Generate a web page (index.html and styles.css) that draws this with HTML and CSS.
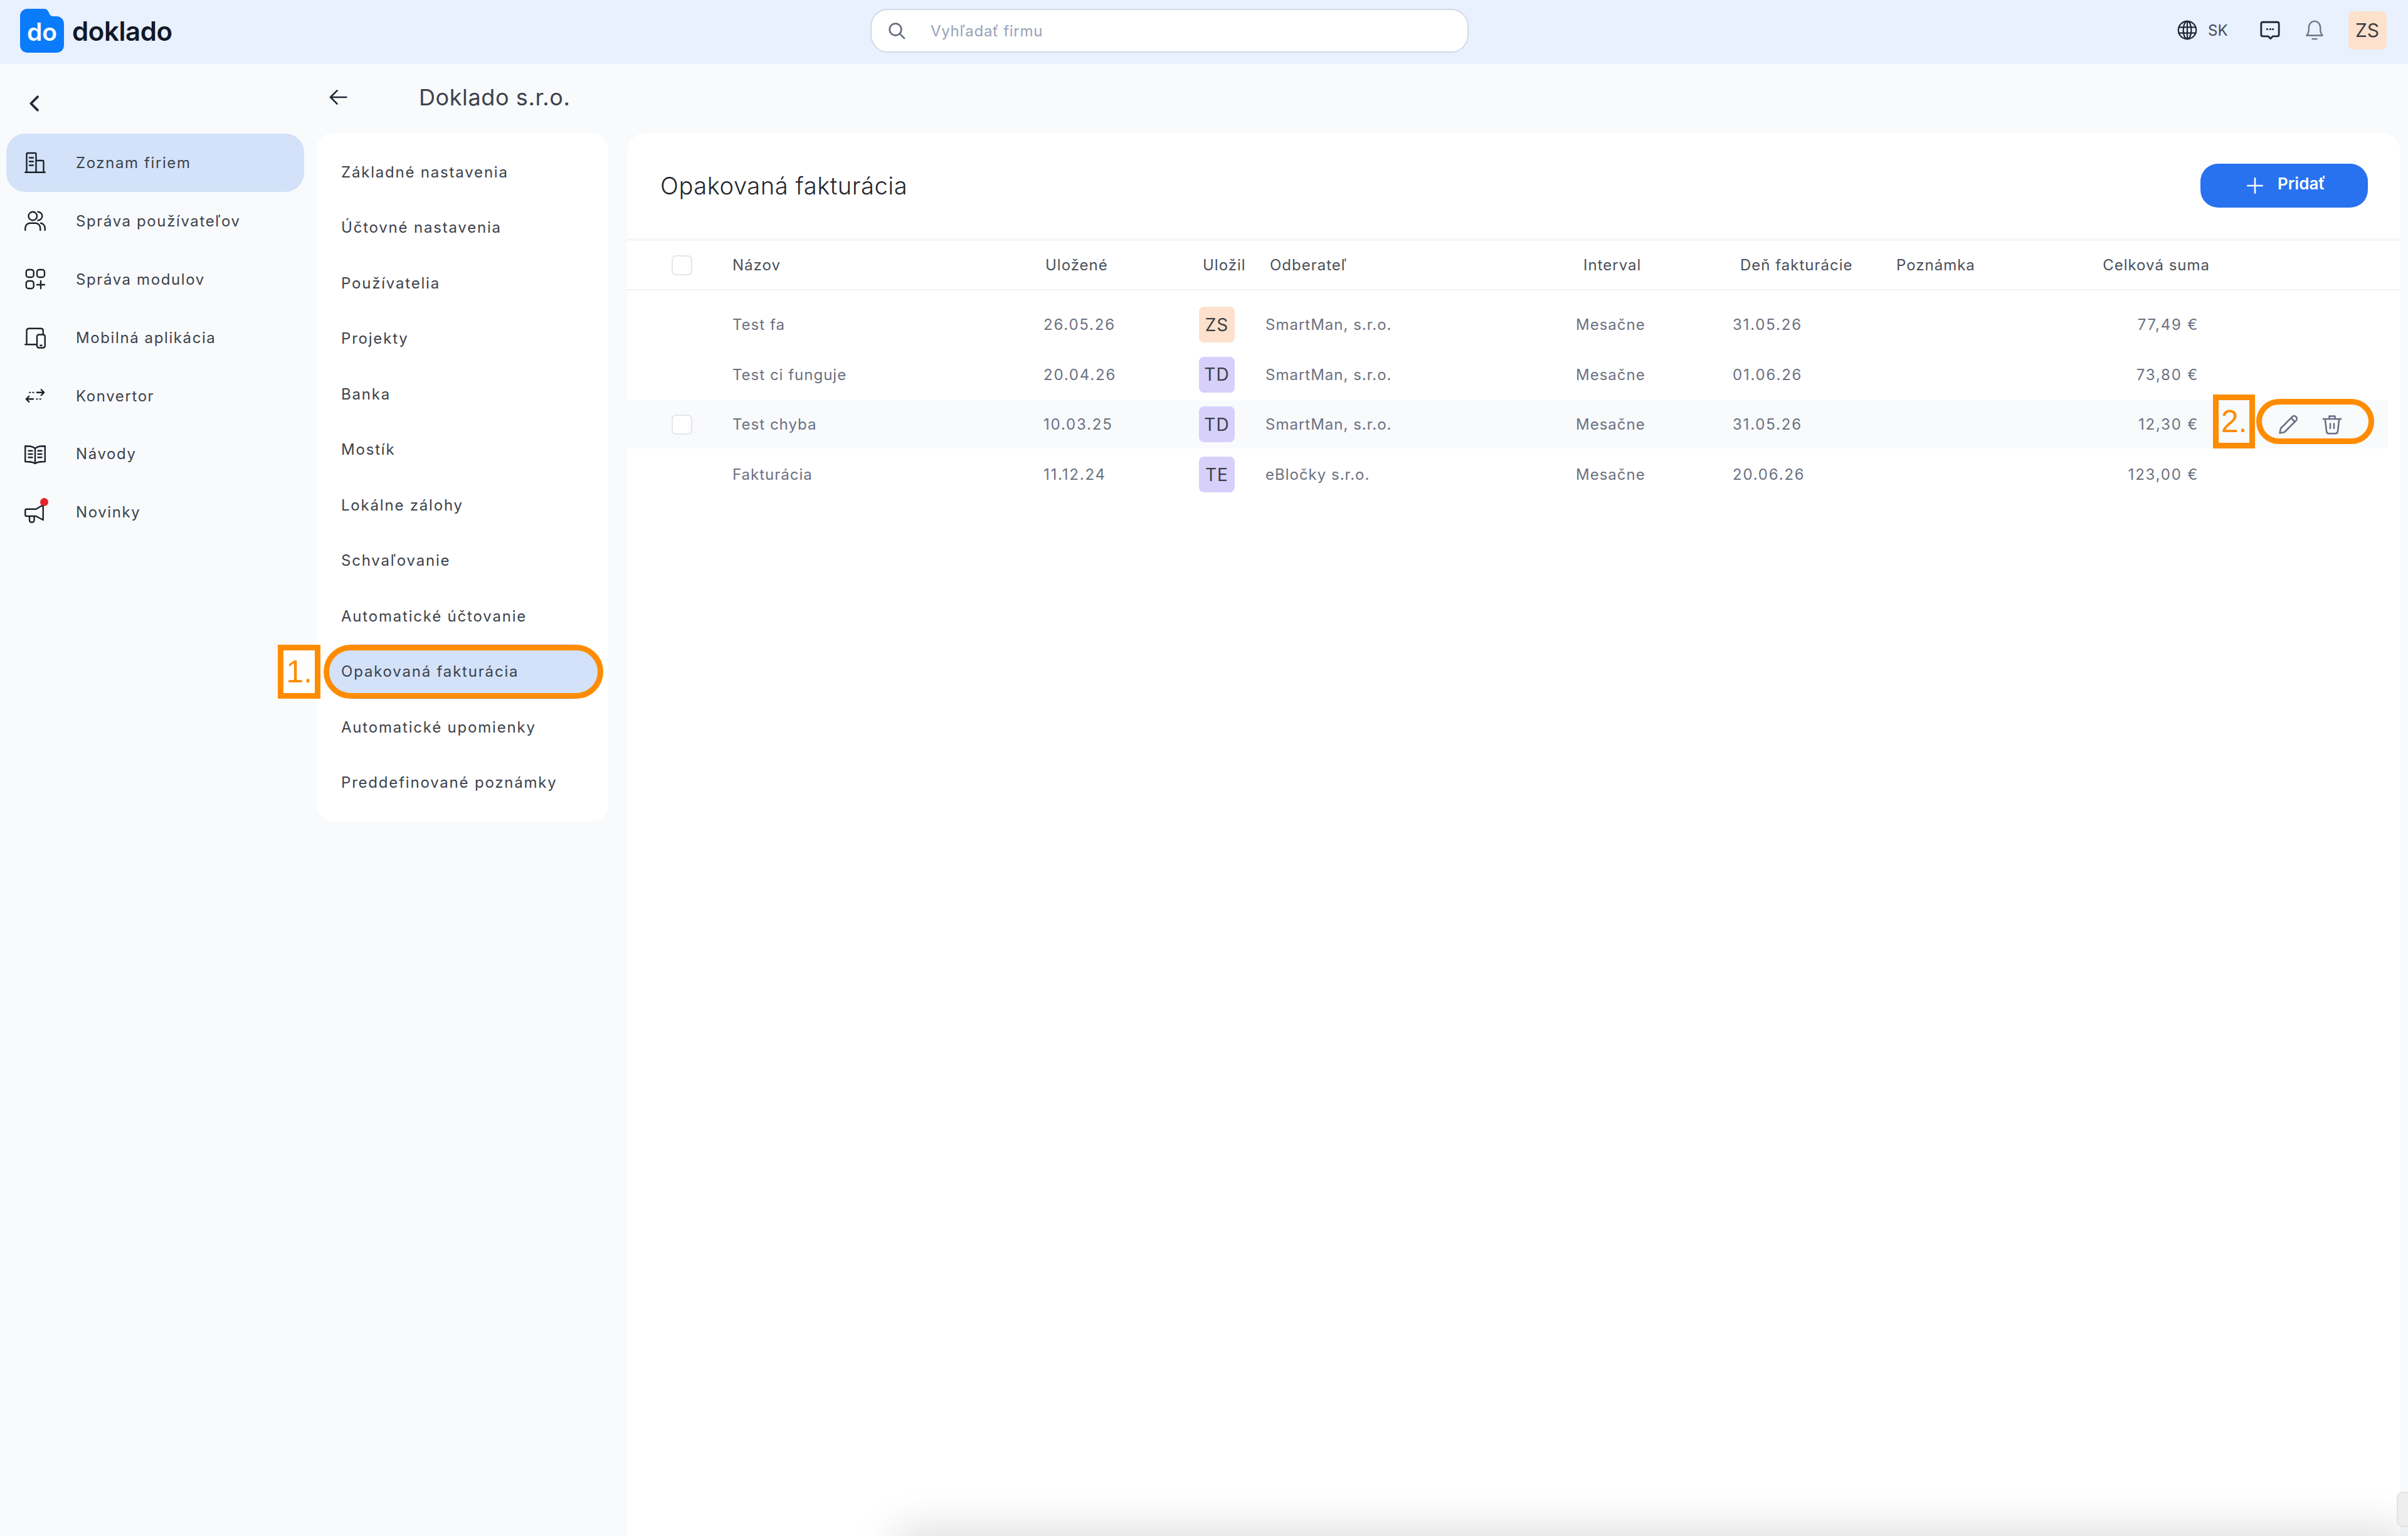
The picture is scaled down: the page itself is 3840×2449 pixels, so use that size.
FILE: index.html
```html
<!DOCTYPE html>
<html lang="sk">
<head>
    <meta charset="UTF-8">
    <meta name="viewport" content="width=device-width, initial-scale=1.0">
    <title>Doklado</title>
    <link rel="stylesheet" href="styles.css">
</head>
<body>
    <header class="topbar">
        <div class="brand">
            <svg class="brand-logo" viewBox="0 0 70 70">
                <path d="M12 0H38C42 0 44 2 46 6C47 10 49 11 52 12H58C65 12 70 17 70 24V58C70 65 65 70 58 70H12C5 70 0 65 0 58V12C0 5 5 0 12 0Z" fill="#0a7bfb"/>
                <text class="brand-logo-text" x="35" y="51" text-anchor="middle">do</text>
            </svg>
            <span class="brand-name">doklado</span>
        </div>
        <div class="search">
            <svg class="search-icon" viewBox="0 0 24 24"><circle cx="10.5" cy="10.5" r="7"/><path d="M15.5 15.5L21 21"/></svg>
            <span class="search-placeholder">Vyhľadať firmu</span>
        </div>
        <div class="topbar-tools">
            <svg class="tool-icon tool-globe" viewBox="0 0 24 24"><circle cx="12" cy="12" r="10"/><ellipse cx="12" cy="12" rx="4.5" ry="10"/><path d="M2.5 8.8H21.5M2.5 15.2H21.5M12 2V22"/></svg>
            <span class="lang">SK</span>
            <svg class="tool-icon tool-chat" viewBox="0 0 24 24"><path d="M4 3H20C21.2 3 22 3.8 22 5V17C22 18.200 21.200 19 20 19H15L12.500 21.500L10 19H4C2.800 19 2 18.200 2 17V5C2 3.800 2.800 3 4 3Z"/><path d="M8.500 11H9M12 11H12.500M15 11H15.500"/></svg>
            <svg class="tool-icon tool-bell" viewBox="0 0 24 24"><path d="M3 18C4.500 16.500 5.500 15 5.500 11V9C5.500 5 8.500 2 12 2C15.500 2 18.500 5 18.500 9V11C18.500 15 19.500 16.500 21 18Z"/><path d="M9.500 22H14.500"/></svg>
            <div class="avatar avatar-user">ZS</div>
        </div>
    </header>

    <div class="layout">
        <nav class="sidebar">
            <div class="sidebar-back">
                <svg class="back-chevron" viewBox="0 0 24 24"><path d="M15 4L7 12L15 20"/></svg>
            </div>
            <a class="nav-item active">
                <svg class="nav-icon" viewBox="0 0 24 24"><path d="M3 22V3C3 2.400 3.400 2 4 2H12C12.600 2 13 2.400 13 3V22M13 10H20C20.600 10 21 10.400 21 11V22M1.500 22.500H22.500M6 7H10M6 11H10M6 15H10"/></svg>
                <span>Zoznam firiem</span>
            </a>
            <a class="nav-item">
                <svg class="nav-icon" viewBox="0 0 24 24"><circle cx="9.500" cy="7" r="4.500"/><path d="M15 2.500C18 2.500 19.500 5 19.500 7C19.500 9 18 11.500 15 11.500M1.500 22V20C1.500 16.500 4 14.500 7 14.500H12C15 14.500 17.500 16.500 17.500 20V22M18 14.500C20.500 15 22.500 17 22.500 20V22"/></svg>
                <span>Správa používateľov</span>
            </a>
            <a class="nav-item">
                <svg class="nav-icon" viewBox="0 0 24 24"><rect x="2.500" y="2" width="8" height="8" rx="2.500"/><rect x="14" y="2" width="8" height="8" rx="2.500"/><rect x="2.500" y="14" width="8" height="8" rx="2.500"/><path d="M18 14V22M14 18H22"/></svg>
                <span>Správa modulov</span>
            </a>
            <a class="nav-item">
                <svg class="nav-icon" viewBox="0 0 24 24"><path d="M3 18V5C3 3.500 4 2.500 5.500 2.500H18C19.500 2.500 20.500 3.500 20.500 5V8M1.500 19.500H13"/><rect x="14" y="9" width="8.500" height="14" rx="2"/><path d="M17.500 20.500H19"/></svg>
                <span>Mobilná aplikácia</span>
            </a>
            <a class="nav-item">
                <svg class="nav-icon" viewBox="0 0 24 24"><path d="M14 8.500H21M18.500 5.500L21.500 8.500L18.500 11.500M3 15.500H10M5.500 12.500L2.500 15.500L5.500 18.500"/><path d="M6 8.500H7M9.500 8.500H10.500M13.500 15.500H14.500M17 15.500H18" stroke-width="1.200"/></svg>
                <span>Konvertor</span>
            </a>
            <a class="nav-item">
                <svg class="nav-icon" viewBox="0 0 24 24"><path d="M12 6C9 3.500 6 3.500 1.500 3.500V20C6 20 9 20 12 22C15 20 18 20 22.500 20V3.500C18 3.500 15 3.500 12 6ZM12 6V22M5 8.500H9M5 12H9M5 15.500H9M15 8.500H19M15 12H19M15 15.500H19"/></svg>
                <span>Návody</span>
            </a>
            <a class="nav-item">
                <span class="nav-icon-wrap">
                    <svg class="nav-icon" viewBox="0 0 24 24"><path d="M20.500 4V20L13 16H3C2 16 1.500 15.500 1.500 14.500V10C1.500 9 2 8.500 3 8.500H13ZM6 16V20C6 21.500 7 22.500 8.500 22.500C10 22.500 11 21.500 11 20V16"/></svg>
                    <span class="nav-dot"></span>
                </span>
                <span>Novinky</span>
            </a>
        </nav>

        <section class="company">
            <div class="company-head">
                <svg class="back-arrow" viewBox="0 0 24 24"><path d="M22 12H3M11 4L3 12L11 20"/></svg>
                <h2 class="company-title">Doklado s.r.o.</h2>
            </div>
            <div class="settings-card">
                <a class="settings-item">Základné nastavenia</a>
                <a class="settings-item">Účtovné nastavenia</a>
                <a class="settings-item">Používatelia</a>
                <a class="settings-item">Projekty</a>
                <a class="settings-item">Banka</a>
                <a class="settings-item">Mostík</a>
                <a class="settings-item">Lokálne zálohy</a>
                <a class="settings-item">Schvaľovanie</a>
                <a class="settings-item">Automatické účtovanie</a>
                <a class="settings-item active">
                    Opakovaná fakturácia
                    <span class="mark-box mark-box-one">1.</span>
                    <span class="mark-oval mark-oval-one"></span>
                </a>
                <a class="settings-item">Automatické upomienky</a>
                <a class="settings-item">Preddefinované poznámky</a>
            </div>
        </section>

        <main class="main-card">
            <div class="card-head">
                <h1 class="card-title">Opakovaná fakturácia</h1>
                <button class="add-btn">
                    <svg class="add-icon" viewBox="0 0 24 24"><path d="M12 2V22M2 12H22"/></svg>
                    <span class="add-label">Pridať</span>
                </button>
            </div>

            <div class="table-head">
                <div class="check-cell"><span class="checkbox"></span></div>
                <div>Názov</div>
                <div>Uložené</div>
                <div>Uložil</div>
                <div>Odberateľ</div>
                <div>Interval</div>
                <div>Deň fakturácie</div>
                <div>Poznámka</div>
                <div class="amount">Celková suma</div>
            </div>

            <div class="table-body">
                <div class="table-row">
                    <div></div>
                    <div>Test fa</div>
                    <div class="num">26.05.26</div>
                    <div><span class="avatar avatar-orange">ZS</span></div>
                    <div>SmartMan, s.r.o.</div>
                    <div>Mesačne</div>
                    <div class="num">31.05.26</div>
                    <div></div>
                    <div class="amount num">77,49 €</div>
                </div>
                <div class="table-row">
                    <div></div>
                    <div>Test ci funguje</div>
                    <div class="num">20.04.26</div>
                    <div><span class="avatar avatar-violet">TD</span></div>
                    <div>SmartMan, s.r.o.</div>
                    <div>Mesačne</div>
                    <div class="num">01.06.26</div>
                    <div></div>
                    <div class="amount num">73,80 €</div>
                </div>
                <div class="table-row hovered">
                    <div class="check-cell"><span class="checkbox"></span></div>
                    <div>Test chyba</div>
                    <div class="num">10.03.25</div>
                    <div><span class="avatar avatar-violet">TD</span></div>
                    <div>SmartMan, s.r.o.</div>
                    <div>Mesačne</div>
                    <div class="num">31.05.26</div>
                    <div></div>
                    <div class="amount num">12,30 €</div>
                    <div class="row-actions">
                        <svg class="action-icon" viewBox="0 0 24 24"><path d="M3 21L4 16L16.500 3.500C17.500 2.500 19 2.500 20 3.500L20.500 4C21.500 5 21.500 6.500 20.500 7.500L8 20Z"/><path d="M15 5L19 9"/></svg>
                        <svg class="action-icon" viewBox="0 0 24 24"><path d="M2.500 6H21.500M9 6V3H15V6M4.500 6L6 19C6.200 20.800 7.200 21.500 8.500 21.500H15.500C16.800 21.500 17.800 20.800 18 19L19.500 6M10 11V16M14 11V16"/></svg>
                    </div>
                    <span class="mark-box mark-box-two">2.</span>
                    <span class="mark-oval mark-oval-two"></span>
                </div>
                <div class="table-row">
                    <div></div>
                    <div>Fakturácia</div>
                    <div class="num">11.12.24</div>
                    <div><span class="avatar avatar-violet">TE</span></div>
                    <div>eBločky s.r.o.</div>
                    <div>Mesačne</div>
                    <div class="num">20.06.26</div>
                    <div></div>
                    <div class="amount num">123,00 €</div>
                </div>
            </div>
        </main>
    </div>

    <!-- tien a widget v rohu okna -->
    <div class="bottom-shade"></div>
    <div class="corner-widget"></div>
</body>
</html>
```

FILE: styles.css
```css
* {
    box-sizing: border-box;
}
html, body {
    height: 100%;
}
body {
    margin: 0;
    font-family: Inter, "Noto Sans", sans-serif;
    background-color: #f9fafc;
    color: #3c424b;
    overflow: hidden;
}
h1, h2 {
    margin: 0;
    font-weight: 400;
}
svg {
    display: block;
    flex: none;
    fill: none;
    stroke-linecap: round;
    stroke-linejoin: round;
}

/* Horna lista */
.topbar {
    height: 102px;
    background-color: #e8f1fd;
    display: grid;
    grid-template-columns: 1388px 954px 1fr;
    align-items: center;
}
.brand {
    display: flex;
    align-items: center;
    padding-left: 32px;
    gap: 13px;
}
.brand-logo {
    width: 70px;
    height: 70px;
    margin-top: -4px;
}
.brand-logo-text {
    font-size: 39px;
    font-weight: 600;
    fill: #fff;
}
.brand-name {
    font-size: 42px;
    font-weight: 600;
    letter-spacing: -0.4px;
    color: #111827;
    margin-top: -4px;
}
.search {
    height: 70px;
    margin-top: -4px;
    background-color: #fff;
    border: 2px solid #d3d9e6;
    border-radius: 28px;
    display: flex;
    align-items: center;
    padding-left: 24px;
}
.search-icon {
    width: 32px;
    height: 32px;
    stroke: #666c80;
    stroke-width: 2;
}
.search-placeholder {
    margin-left: 38px;
    font-size: 24px;
    letter-spacing: 0.7px;
    color: #98a2b8;
}
.topbar-tools {
    display: flex;
    align-items: center;
    padding-left: 1129px;
    margin-top: -6px;
}
.tool-icon {
    width: 34px;
    height: 34px;
    stroke-width: 1.6;
}
.tool-globe {
    stroke: #1f2937;
}
.tool-chat {
    margin-left: 50px;
    stroke: #1f2937;
    stroke-width: 2;
}
.tool-bell {
    margin-left: 37px;
    stroke: #6a7285;
}
.lang {
    margin-left: 16px;
    font-size: 24px;
    color: #454c58;
}
.avatar {
    display: inline-flex;
    align-items: center;
    justify-content: center;
    width: 57px;
    height: 57px;
    border-radius: 8px;
    font-size: 28px;
    color: #3b3f46;
}
.avatar-user {
    width: 61px;
    height: 61px;
    margin-left: 37px;
    font-size: 30px;
    background-color: #fde1cc;
}
.avatar-orange {
    background-color: #fde1cc;
}
.avatar-violet {
    background-color: #d7d0fa;
}

.layout {
    display: flex;
    height: calc(100% - 102px);
}

/* Lavy panel */
.sidebar {
    width: 505px;
    flex: none;
    padding-left: 10px;
}
.sidebar-back {
    height: 111px;
    padding: 47px 0 0 30px;
}
.back-chevron {
    width: 32px;
    height: 32px;
    stroke: #1f2937;
    stroke-width: 2.800;
}
.nav-item {
    display: flex;
    align-items: center;
    width: 475px;
    height: 92.900px;
    padding-left: 28px;
    gap: 47px;
    border-radius: 30px;
    font-size: 24px;
    letter-spacing: 1.600px;
}
.nav-item.active {
    background-color: #d3e2f9;
}
.nav-icon {
    width: 36px;
    height: 36px;
    stroke: #1c222c;
    stroke-width: 1.600;
}
.nav-icon-wrap {
    position: relative;
}
.nav-dot {
    position: absolute;
    top: -5px;
    right: -3px;
    width: 13px;
    height: 13px;
    border-radius: 50%;
    background-color: #e3242b;
}

/* Nastavenia firmy */
.company {
    width: 495px;
    flex: none;
}
.company-head {
    height: 110px;
    display: flex;
    align-items: center;
    padding-left: 18px;
    padding-bottom: 4px;
}
.back-arrow {
    width: 32px;
    height: 32px;
    stroke: #1f2937;
    stroke-width: 2;
}
.company-title {
    margin-left: 113px;
    font-size: 36px;
    letter-spacing: 0.6px;
}
.settings-card {
    width: 465px;
    height: 1098px;
    padding-top: 18px;
    background-color: #fff;
    border-radius: 26px;
}
.settings-item {
    position: relative;
    display: flex;
    align-items: center;
    height: 88.500px;
    margin: 0 15px 0 18px;
    padding-left: 21px;
    font-size: 24px;
    letter-spacing: 1.800px;
}
.settings-item.active {
    background-color: #d3e2f9;
    border-radius: 44px;
}

/* Oranzove oznacenia */
.mark-box {
    position: absolute;
    display: flex;
    align-items: center;
    justify-content: center;
    border: 9px solid #ff8c00;
    font-family: "Liberation Sans", sans-serif;
    font-size: 50px;
    font-weight: 400;
    letter-spacing: 0;
    color: #ff8c00;
    background-color: #fff;
}
.mark-oval {
    position: absolute;
    border: 9px solid #ff8c00;
    border-radius: 44px;
}
.mark-box-one {
    left: -80px;
    top: 1px;
    width: 68px;
    height: 86px;
}
.mark-oval-one {
    left: -7px;
    right: -7px;
    top: 1px;
    bottom: 1px;
}
.mark-box-two {
    left: 2529px;
    top: -9px;
    width: 67px;
    height: 86px;
    background-color: #f8fafc;
}
.mark-oval-two {
    left: 2598px;
    top: -2px;
    width: 188px;
    height: 72px;
}

/* Hlavna karta */
.main-card {
    width: 2828px;
    flex: none;
    background-color: #fff;
    border-radius: 30px 30px 0 0;
    margin-top: 110px;
}
.card-head {
    height: 172px;
    display: flex;
    align-items: center;
    justify-content: space-between;
    padding: 0 52px 0 53px;
    border-bottom: 4px solid #f5f6f8;
}
.card-title {
    font-size: 38px;
    font-weight: 300;
    letter-spacing: 0.6px;
    color: #22262d;
}
.add-btn {
    display: flex;
    align-items: center;
    width: 267px;
    height: 70px;
    padding-left: 73px;
    gap: 22px;
    border: none;
    border-radius: 28px;
    background-color: #2872f0;
    font-family: inherit;
    color: #fff;
}
.add-icon {
    width: 28px;
    height: 28px;
    stroke: #fff;
    stroke-width: 2.200;
}
.add-label {
    font-size: 26px;
    font-weight: 600;
    margin-top: -8px;
}
.table-head, .table-row {
    display: grid;
    align-items: center;
    font-size: 24px;
    letter-spacing: 1px;
}
.table-head {
    grid-template-columns: 168px 499px 251px 107px 500px 250px 249px 250px 250px;
    height: 79px;
    border-bottom: 2px solid #f0f1f4;
    color: #4b5059;
}
.table-body {
    padding-top: 16px;
}
.table-row {
    position: relative;
    grid-template-columns: 168px 496px 248px 106px 495px 250px 257px 243px 243px 1fr;
    width: 2808px;
    height: 77px;
    margin-bottom: 2.700px;
    color: #6c7181;
}
.table-row.hovered {
    background-color: #f8fafc;
}
.check-cell {
    padding-left: 71px;
}
.checkbox {
    display: block;
    width: 33px;
    height: 32px;
    background-color: #fff;
    border: 2px solid #e4e6eb;
    border-radius: 7px;
}
.amount {
    text-align: right;
}
.num {
    letter-spacing: 1.800px;
}
.row-actions {
    display: flex;
    gap: 34px;
    padding-left: 125px;
}
.action-icon {
    width: 36px;
    height: 36px;
    stroke: #6a6f82;
    stroke-width: 1.700;
}
.bottom-shade {
    position: fixed;
    left: 1430px;
    right: 0;
    bottom: -40px;
    height: 40px;
    box-shadow: 0 0 70px rgba(0, 0, 0, 0.22);
}
.corner-widget {
    position: fixed;
    right: -20px;
    bottom: 14px;
    width: 38px;
    height: 57px;
    background-color: #eeeeee;
    border: 2px solid #e2e2e2;
    border-radius: 10px;
}
```
